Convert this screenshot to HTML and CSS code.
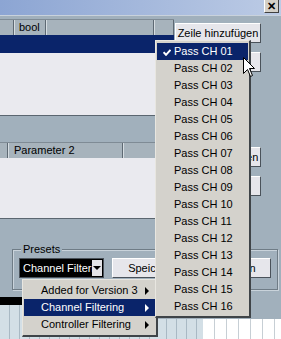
FILE: index.html
```html
<!DOCTYPE html>
<html lang="de">
<head>
  <meta charset="UTF-8">
  <title>MIDI Modifier</title>
  <link rel="stylesheet" href="styles.css">
</head>
<body>
  <div class="window">
    <!-- Titelleiste -->
    <div class="titlebar">
      <div class="close-btn">✕</div>
    </div>

    <!-- Obere Tabelle -->
    <div class="section section-top">
      <div class="table table-top">
        <div class="table-head">
          <div class="cell cell-stub"></div>
          <div class="cell cell-bool">bool</div>
          <div class="cell cell-fill"></div>
          <div class="cell cell-end"></div>
        </div>
        <div class="row-selected"></div>
        <div class="table-body"></div>
      </div>
      <div class="side">
        <div class="btn">Zeile hinzufügen</div>
        <div class="btn">Löschen</div>
      </div>
    </div>

    <!-- Untere Tabelle -->
    <div class="section section-bottom">
      <div class="table table-low">
        <div class="table-head">
          <div class="cell cell-stub2"></div>
          <div class="cell cell-param">Parameter 2</div>
          <div class="cell cell-fill"></div>
        </div>
        <div class="table-body"></div>
      </div>
      <div class="side side-low">
        <div class="btn">Zeile hinzufügen</div>
        <div class="btn">Löschen</div>
      </div>
    </div>

    <!-- Presets -->
    <div class="presets">
      <span class="presets-label">Presets</span>
      <div class="presets-row">
        <div class="combo">
          <span class="combo-text">Channel Filtering</span>
          <span class="combo-arrow"></span>
        </div>
        <div class="btn btn-save">Speichern</div>
        <div class="btn btn-del">Löschen</div>
      </div>
    </div>

    <!-- Unterer Bereich -->
    <div class="lower">
      <div class="lower-left">
        <div class="black-bar"></div>
        <div class="grid grid-blue"></div>
      </div>
      <div class="lower-right">
        <div class="grid grid-blue grid-narrow"></div>
        <div class="grid grid-white"></div>
      </div>
    </div>

    <!-- Preset-Auswahl (Untermenü) -->
    <div class="menu submenu">
      <div class="menu-item">Added for Version 3<span class="arrow"></span></div>
      <div class="menu-item active">Channel Filtering<span class="arrow"></span></div>
      <div class="menu-item">Controller Filtering<span class="arrow"></span></div>
    </div>

    <!-- Kanal-Menü -->
    <div class="menu channel-menu">
      <div class="menu-item active">
        <svg class="check" width="8" height="7" viewBox="0 0 8 7"><path d="M0.5 3.2 L3 5.8 L7.5 0.8" fill="none" stroke="#fff" stroke-width="2"/></svg>Pass CH 01
      </div>
      <div class="menu-item">Pass CH 02</div>
      <div class="menu-item">Pass CH 03</div>
      <div class="menu-item">Pass CH 04</div>
      <div class="menu-item">Pass CH 05</div>
      <div class="menu-item">Pass CH 06</div>
      <div class="menu-item">Pass CH 07</div>
      <div class="menu-item">Pass CH 08</div>
      <div class="menu-item">Pass CH 09</div>
      <div class="menu-item">Pass CH 10</div>
      <div class="menu-item">Pass CH 11</div>
      <div class="menu-item">Pass CH 12</div>
      <div class="menu-item">Pass CH 13</div>
      <div class="menu-item">Pass CH 14</div>
      <div class="menu-item">Pass CH 15</div>
      <div class="menu-item">Pass CH 16</div>
    </div>

    <!-- Mauszeiger -->
    <svg class="cursor" width="13" height="21" viewBox="0 0 13 21">
      <path d="M0.5 0.5 L0.5 16.5 L4.5 12.5 L7.5 19.5 L9.5 18.5 L6.5 11.5 L11.5 11.5 Z" fill="#fff" stroke="#000" stroke-width="1"/>
    </svg>
  </div>
</body>
</html>
```

FILE: styles.css
```css
/* Grundlayout */
body {
  margin: 0;
  padding: 0;
  font-family: "Liberation Sans", Arial, sans-serif;
  font-size: 11px;
  color: #000;
}

.window {
  position: relative;
  width: 281px;
  height: 339px;
  overflow: hidden;
  background: #a1b0bc;
}

/* Titelleiste */
.titlebar {
  height: 15px;
  border-bottom: 1px solid #c9d2dc;
  background: linear-gradient(to right, #8ca5d3, #bccbe5);
  display: flex;
  justify-content: flex-end;
  padding-right: 2px;
}

.close-btn {
  width: 13px;
  height: 12px;
  background: #d4d0c8;
  border-right: 1px solid #404040;
  border-bottom: 1px solid #404040;
  border-left: 1px solid #fff;
  font-size: 11px;
  font-weight: bold;
  line-height: 12px;
  text-align: center;
}

/* Tabellen */
.section {
  display: flex;
}

.section-top {
  margin-top: 3px;
}

.section-bottom {
  margin-top: 26px;
}

.table {
  width: 174px;
  display: flex;
  flex-direction: column;
  border-bottom: 1px solid #5b6670;
}

.table-head {
  display: flex;
  height: 15px;
  border-top: 1px solid #7f8b95;
  background: #a7b3bc;
}

.cell {
  border-left: 1px solid #d6dde2;
  border-right: 1px solid #5e6973;
  line-height: 15px;
  padding-left: 4px;
  box-sizing: border-box;
}

.cell-stub { width: 14px; border-left: none; }
.cell-bool { width: 32px; }
.cell-fill { flex: 1; }
.cell-end { width: 20px; }
.cell-stub2 { width: 8px; border-left: none; }
.cell-param { width: 115px; padding-left: 5px; }

.row-selected {
  height: 18px;
  background: #0a246a;
}

.table-top .table-body {
  height: 62px;
  background: #eaeaef;
}

.table-low .table-body {
  height: 60px;
  background: #eaeaef;
}

/* Schaltflächen */
.side {
  display: flex;
  flex-direction: column;
  gap: 9px;
  padding-top: 4px;
  margin-left: 1px;
}

.side-low {
  padding-top: 5px;
}

.btn {
  height: 20px;
  box-sizing: border-box;
  background: #e6e6eb;
  border-top: 1px solid #fff;
  border-left: 1px solid #fff;
  border-right: 1px solid #4a525a;
  border-bottom: 1px solid #4a525a;
  line-height: 18px;
  text-align: center;
  white-space: nowrap;
  overflow: hidden;
}

.side .btn {
  width: 86px;
}

/* Presets */
.presets {
  margin: 30px 3px 0 12px;
  height: 39px;
  border: 1px solid #6f7c86;
  box-shadow: inset 1px 1px 0 #c9d3db, 1px 1px 0 #c9d3db;
  padding: 0 6px;
}

.presets-label {
  display: inline-block;
  margin: -7px 0 0 2px;
  padding: 0 2px;
  background: #a1b0bc;
  font-size: 11px;
  line-height: 13px;
  vertical-align: top;
}

.presets-row {
  display: flex;
  align-items: center;
  gap: 8px;
  margin-top: -4px;
}

.combo {
  width: 86px;
  height: 20px;
  box-sizing: border-box;
  background: #000;
  border: 1px solid #4a525a;
  display: flex;
  align-items: center;
  overflow: hidden;
}

.combo-text {
  flex: 1;
  color: #fff;
  padding-left: 3px;
  white-space: nowrap;
  overflow: hidden;
}

.combo-arrow {
  width: 10px;
  height: 16px;
  margin-right: 1px;
  background: #e4e4e8;
  position: relative;
}

.combo-arrow::after {
  content: "";
  position: absolute;
  left: 1px;
  top: 6px;
  border-left: 4px solid transparent;
  border-right: 4px solid transparent;
  border-top: 4px solid #000;
}

.btn-save { width: 82px; }
.btn-del { width: 73px; margin-left: -3px; }

/* Unterer Bereich */
.lower {
  display: flex;
  margin-top: 7px;
  height: 45px;
}

.lower-left {
  width: 157px;
  display: flex;
  flex-direction: column;
}

.black-bar {
  height: 8px;
  background: #000;
}

.grid {
  flex: 1;
}

.grid-blue {
  background: repeating-linear-gradient(to right, #d3dfe6 0, #d3dfe6 9px, #a9b9c4 9px, #a9b9c4 10px);
}

.lower-right {
  flex: 1;
  display: flex;
  padding-top: 22px;
}

.grid-narrow {
  flex: none;
  width: 46px;
}

.grid-white {
  background: repeating-linear-gradient(to right, #fff 0, #fff 11px, #c7cfd5 11px, #c7cfd5 12px);
}

/* Menüs */
.menu {
  position: absolute;
  background: #d4d2cc;
  border-top: 1px solid #e8e6e0;
  border-left: 1px solid #e8e6e0;
  border-right: 2px solid #3f4448;
  border-bottom: 2px solid #3f4448;
  padding: 2px 1px;
  box-sizing: border-box;
}

.menu-item {
  height: 17px;
  line-height: 17px;
  position: relative;
  white-space: nowrap;
}

.menu-item.active {
  background: #0a246a;
  color: #fff;
}

.channel-menu {
  left: 155px;
  top: 40px;
  width: 96px;
  height: 278px;
}

.channel-menu .menu-item {
  padding-left: 17px;
}

.check {
  position: absolute;
  left: 6px;
  top: 6px;
}

.submenu {
  left: 22px;
  top: 279px;
  width: 136px;
  height: 58px;
}

.submenu .menu-item {
  padding-left: 17px;
}

.arrow {
  position: absolute;
  right: 6px;
  top: 5px;
  border-top: 4px solid transparent;
  border-bottom: 4px solid transparent;
  border-left: 4px solid #000;
}

.menu-item.active .arrow {
  border-left-color: #fff;
}

.cursor {
  position: absolute;
  left: 243px;
  top: 57px;
}
```
